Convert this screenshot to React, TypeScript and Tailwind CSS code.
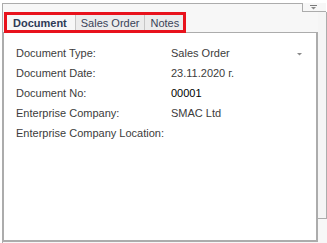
import React from "react";

const rows = [
  { label: "Document Type:", value: "Sales Order", dropdown: true },
  { label: "Document Date:", value: "23.11.2020 г." },
  { label: "Document No:", value: "00001", strong: true },
  { label: "Enterprise Company:", value: "SMAC Ltd" },
  { label: "Enterprise Company Location:", value: "" },
];

const Arrow = ({ bar }: { bar?: boolean }) => (
  <svg width="7" height="5" viewBox="0 0 7 5" className="block">
    {bar && <rect x="0" y="0" width="7" height="1" fill="#7a7a7a" />}
    <path d="M1 2h5L3.5 4.5z" fill="#8a8a8a" />
  </svg>
);

export default function App() {
  const tabs = ["Document", "Sales Order", "Notes"];

  return (
    <div
      className="w-[327px] h-[243px] bg-white pt-[3px] pl-[2px] flex flex-col overflow-hidden text-[11px] text-[#3c3c3c]"
      style={{ fontFamily: '"Liberation Sans", Arial, sans-serif' }}
    >
      {/* header strip with notch */}
      <div className="flex h-[9px] shrink-0">
        <div className="w-[301px] border-l border-t border-r border-[#acacac] bg-[#f7f7f7]" />
        <div className="w-[23px] border-b border-[#acacac] bg-[#f7f7f7] flex justify-end pr-[9px] pt-[2px]">
          <Arrow bar />
        </div>
      </div>

      <div className="flex flex-1 border-l border-[#acacac] bg-[#f7f7f7]">
        <div className="w-[315px] flex flex-col">
          {/* tabs */}
          <div className="relative h-[20px] shrink-0 flex items-end pl-[2px]">
            {tabs.map((t, i) => (
              <div
                key={t}
                className={
                  i === 0
                    ? "h-[19px] pl-[7px] pr-[8px] flex items-center font-bold bg-[#f7f7f7] border-t border-l border-r border-[#c6c6c6] text-[#2e3a55]"
                    : "h-[18px] px-[5px] flex items-center bg-[#ececec] border-t border-r border-[#c6c6c6] text-[#3a4358]"
                }
              >
                {t}
              </div>
            ))}
            <div className="absolute left-[1px] top-0 w-[182px] h-[21px] border-[3px] border-[#e8121c] pointer-events-none" />
          </div>

          {/* panel */}
          <div className="flex-1 mb-[1px] bg-white border-t border-b-2 border-r-2 border-l border-[#acacac] pt-[10px] pl-[12px] pr-[13px]">
            {rows.map((r) => (
              <div key={r.label} className="h-[20px] flex items-center">
                <div className="w-[155px] shrink-0">{r.label}</div>
                <div className={"flex-1 flex items-center justify-between " + (r.strong ? "text-black" : "")}>
                  <span>{r.value}</span>
                  {r.dropdown && <Arrow />}
                </div>
              </div>
            ))}
          </div>
        </div>

        <div className="w-[9px] h-[207px] border-r border-b border-[#acacac] bg-[#f5f5f5]" />
      </div>
    </div>
  );
}
